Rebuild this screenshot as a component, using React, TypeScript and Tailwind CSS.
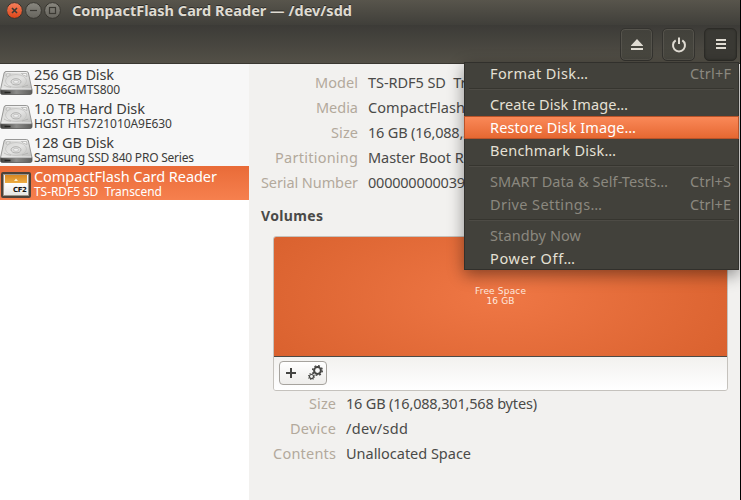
import { useLayoutEffect, useRef, useState } from "react";

/* One line of text whose tracking is adjusted so that it fills `w` pixels. */
function Fit({ text, w, className = "" }: { text: string; w: number; className?: string }) {
  const ref = useRef<HTMLSpanElement>(null);
  const [spacing, setSpacing] = useState(0);
  useLayoutEffect(() => {
    const el = ref.current;
    if (el) setSpacing((w - el.getBoundingClientRect().width) / (text.length - 1));
  }, [text, w]);
  return (
    <span className={"block whitespace-pre " + className} style={{ width: w }}>
      <span ref={ref} className="inline-block" style={{ letterSpacing: spacing }}>
        {text}
      </span>
    </span>
  );
}

function DiskIcon() {
  return (
    <svg width="33" height="26" viewBox="0 0 33 26" className="block">
      <defs>
        <linearGradient id="lid" x1="0" y1="0" x2="1" y2="1">
          <stop offset="0" stopColor="#cfcfcd" />
          <stop offset="0.5" stopColor="#e4e4e3" />
          <stop offset="1" stopColor="#b8b8b6" />
        </linearGradient>
        <linearGradient id="front" x1="0" x2="1">
          <stop offset="0" stopColor="#3e3e3c" />
          <stop offset="0.5" stopColor="#8c8c8a" />
          <stop offset="1" stopColor="#5d5d5b" />
        </linearGradient>
      </defs>
      <path d="M0.500 19.500h31.500v3.200q0 1.800-1.800 1.800H2.300Q.500 24.500 .500 22.700z" fill="url(#front)" stroke="#565654" strokeWidth=".8" />
      <path d="M6 1.500h20.500q1.500 0 1.900 1.500l3.600 16.700H.500L4.100 3Q4.500 1.500 6 1.500z" fill="url(#lid)" stroke="#8f8f8d" strokeWidth=".9" />
      <path d="M6 2.600h20.700M1.500 19h29.500" stroke="#f8f8f7" strokeWidth=".8" />
      <ellipse cx="16" cy="11" rx="10.500" ry="6.500" fill="none" stroke="#c3c3c1" strokeWidth=".8" />
      <ellipse cx="16" cy="11.800" rx="5" ry="3.100" fill="#dededd" stroke="#a6a6a4" strokeWidth=".8" />
      <ellipse cx="16" cy="11.800" rx="2.600" ry="1.500" fill="#eee" stroke="#b4b4b2" strokeWidth=".6" />
      <path d="M6.500 4h4L8.500 6h-2.500zM21.500 3.500h5l.5 3-4-1.500zM4 15l3 1.500 4 .7M22 17l6-1.800" fill="#f6f6f5" stroke="#a4a4a2" strokeWidth=".6" />
      <path d="M4.500 22.500h6" stroke="#242422" strokeWidth="1.600" />
    </svg>
  );
}

function CardIcon() {
  return (
    <div className="ml-px flex h-[26px] w-[30px] flex-col rounded-[2px] border-2 border-[#4b423a] bg-[#f1f1ef] shadow-[inset_0_0_0_1px_#9b948a]">
      <div className="mx-[2px] mt-px flex h-[8px] shrink-0 justify-center bg-linear-to-b from-[#d88721] to-[#edad43]">
        <svg width="6" height="8" className="block">
          <path d="M1 6L3 3.500l2 2.500z" fill="#fff2cf" />
        </svg>
      </div>
      <div className="mx-[2px] flex h-[12px] items-end justify-end bg-linear-to-b from-white to-[#e6e6e3] font-['DejaVu_Sans'] text-[7px] leading-[9px] font-bold text-[#111]">
        <Fit text="CF2" w={14} />
      </div>
    </div>
  );
}

const disks = [
  { name: "256 GB Disk", nw: 80, sub: "TS256GMTS800", sw: 86 },
  { name: "1.0 TB Hard Disk", nw: 111, sub: "HGST HTS721010A9E630", sw: 138 },
  { name: "128 GB Disk", nw: 80, sub: "Samsung SSD 840 PRO Series", sw: 160 },
  { name: "CompactFlash Card Reader", nw: 183, sub: "TS-RDF5 SD  Transcend", sw: 128, active: true },
];

const details = [
  { label: "Model", lw: 43, value: "TS-RDF5 SD  Transcend", vw: 155 },
  { label: "Media", lw: 42, value: "CompactFlash", vw: 97 },
  { label: "Size", lw: 27, value: "16 GB (16,088,301,568 bytes)", vw: 191 },
  { label: "Partitioning", lw: 83, value: "Master Boot Record", vw: 134 },
  { label: "Serial Number", lw: 97, value: "000000000039", vw: 97 },
];

const volume = [
  { label: "Size", lw: 27, value: "16 GB (16,088,301,568 bytes)", vw: 191 },
  { label: "Device", lw: 46, value: "/dev/sdd", vw: 62 },
  { label: "Contents", lw: 63, value: "Unallocated Space", vw: 125 },
];

function Row({ label, lw, value, vw, col }: { label: string; lw: number; value: string; vw: number; col: string }) {
  return (
    <div className="flex h-[25px] gap-[10px] text-[14.5px] leading-[25px]">
      <div className={"flex shrink-0 justify-end text-[#b3a99c] " + col}>
        <Fit text={label} w={lw} />
      </div>
      <Fit text={value} w={vw} className="text-[#4a4a48]" />
    </div>
  );
}

type Entry = { text: string; w: number; keys?: string; tone?: string } | null;
const menu: Entry[] = [
  { text: "Format Disk…", w: 98, keys: "Ctrl+F" },
  null,
  { text: "Create Disk Image…", w: 138 },
  { text: "Restore Disk Image…", w: 146, tone: "active" },
  { text: "Benchmark Disk…", w: 126 },
  null,
  { text: "SMART Data & Self-Tests…", w: 178, keys: "Ctrl+S", tone: "off" },
  { text: "Drive Settings…", w: 112, keys: "Ctrl+E", tone: "off" },
  null,
  { text: "Standby Now", w: 91, tone: "off" },
  { text: "Power Off…", w: 85 },
];

const toolButton =
  "flex h-[33px] w-[33px] items-center justify-center rounded-[5px] border border-[#34332f] bg-linear-to-b from-[#42413b] to-[#494840] shadow-[inset_0_0_0_1px_#55534c]";

function Menu() {
  return (
    <div className="absolute top-[62px] left-[464px] z-10 h-[208px] w-[275px] bg-[#42413b] text-[14.5px] shadow-[inset_0_0_0_1px_#31302c,0_5px_15px_rgba(0,0,0,0.42)]">
      {menu.map((m, i) =>
        m === null ? (
          <div key={i} className="flex h-[8px] items-center px-[5px]">
            <div className="h-[2px] w-full border-t border-b border-t-[#36352f] border-b-[#4d4b45]" />
          </div>
        ) : (
          <div
            key={i}
            className={
              "flex h-[23px] items-center justify-between pr-[8px] pl-[26px] leading-[21px] " +
              (m.tone === "active"
                ? "bg-linear-to-b from-[#fb8a59] to-[#e5662f] text-white shadow-[inset_0_0_0_1px_#b95329]"
                : m.tone === "off"
                  ? "text-[#8b887f]"
                  : "text-[#e5e0d5]")
            }
          >
            <Fit text={m.text} w={m.w} />
            {m.keys && <Fit text={m.keys} w={41} className="text-[#8b887f]" />}
          </div>
        ),
      )}
    </div>
  );
}

export default function App() {
  return (
    <div className="relative flex h-[500px] w-[741px] flex-col overflow-hidden border-r border-black bg-[#f2f1ef] font-['Noto_Sans',sans-serif]">
      <header className="shrink-0">
        <div className="flex h-[25px] items-center bg-linear-to-b from-[#58554c] to-[#403f3a] pl-[7px]">
          <svg width="54" height="18" viewBox="0 0 54 18" className="-mt-[6px] block shrink-0">
            <defs>
              <linearGradient id="red" x1="0" y1="0" x2="0" y2="1">
                <stop stopColor="#f5805d" />
                <stop offset="1" stopColor="#dd4517" />
              </linearGradient>
              <linearGradient id="grey" x1="0" y1="0" x2="0" y2="1">
                <stop stopColor="#8a8880" />
                <stop offset="1" stopColor="#65635c" />
              </linearGradient>
            </defs>
            <g stroke="#37352f" strokeWidth="1">
              <circle cx="7.500" cy="9.500" r="7.900" fill="url(#red)" />
              <circle cx="26.500" cy="9.500" r="7.900" fill="url(#grey)" />
              <circle cx="45.500" cy="9.500" r="7.900" fill="url(#grey)" />
            </g>
            <g fill="none" stroke="#3b3933" strokeWidth="1.200">
              <path d="M5 7l5 5M10 7l-5 5" strokeWidth="1.600" />
              <path d="M23 9.500h7" />
              <rect x="42.500" y="6.500" width="6" height="6" />
            </g>
          </svg>
          <Fit
            text="CompactFlash Card Reader — /dev/sdd"
            w={280}
            className="-mt-[6px] ml-[11px] text-[14.5px] leading-[20px] font-bold text-[#dfdbd2] [text-shadow:0_-1px_0_#2d2c28]"
          />
        </div>
        <div className="flex h-[39px] justify-end gap-[9px] border-b border-[#393731] bg-linear-to-b from-[#3c3b37] to-[#535047] pt-[3px] pr-[3px]">
          <div className={toolButton}>
            <svg width="14" height="14" viewBox="0 0 14 14" fill="#dfdbd2">
              <path d="M7 1L13 7.500v.5H1v-.5zM1 10h12v2H1z" />
            </svg>
          </div>
          <div className={toolButton}>
            <svg width="16" height="16" viewBox="0 0 16 16" fill="none" stroke="#dfdbd2" strokeWidth="2">
              <path d="M4.700 3.400a6 6 0 1 0 6.600 0M8 .5V7" />
            </svg>
          </div>
          <div className="flex h-[33px] w-[33px] items-center justify-center rounded-[5px] border border-[#2c2b27] bg-[#3a3934] shadow-[inset_0_0_2px_#292824]">
            <svg width="10" height="10" viewBox="0 0 10 10" fill="#dfdbd2" className="-mt-px">
              <path d="M0 0h10v2H0zM0 4h10v2H0zM0 8h10v2H0z" />
            </svg>
          </div>
        </div>
      </header>

      <div className="flex min-h-0 flex-1">
        <aside className="w-[249px] shrink-0 bg-white">
          {disks.map((d) => (
            <div
              key={d.name}
              className={
                "flex h-[34px] " +
                (d.active ? "bg-linear-to-b from-[#e96b38] to-[#f6804e] text-white" : "bg-[#f7f7f7] text-[#3c3c3a]")
              }
            >
              <div className="flex w-[34px] shrink-0 items-center pt-[4px]">{d.active ? <CardIcon /> : <DiskIcon />}</div>
              <div className="pt-[2px]">
                <Fit text={d.name} w={d.nw} className="h-[17px] text-[14.5px] leading-[17px]" />
                <Fit text={d.sub} w={d.sw} className="h-[14px] text-[12px] leading-[14px]" />
              </div>
            </div>
          ))}
        </aside>

        <main className="min-w-0 flex-1 overflow-hidden pt-[6px]">
          {details.map((r) => (
            <Row key={r.label} {...r} col="w-[109px]" />
          ))}
          <Fit text="Volumes" w={62} className="mt-[10px] ml-[12px] h-[22px] text-[14px] leading-[22px] font-bold text-[#4a4a48]" />
          <div className="mt-[9px] ml-6 h-[155px] w-[455px] overflow-hidden rounded-[3px] border border-[#c5c2bd]">
            <div className="flex h-[120px] flex-col items-center border-b border-[#4b4a46] bg-[radial-gradient(260px_110px_at_center,#ef7745,#da622f)] pt-[49px] font-['DejaVu_Sans'] text-[9px] leading-[10px] text-[#ffe9df]">
              <Fit text="Free Space" w={51} />
              <Fit text="16 GB" w={28} />
            </div>
            <div className="flex h-[33px] bg-linear-to-b from-[#f2f1ef] to-white pt-[4px] pl-[5px]">
              <div className="flex h-[24px] w-[48px] items-center rounded-[4px] border border-[#a6a39e] bg-linear-to-b from-white to-[#eeedeb]">
                <svg width="46" height="22" viewBox="0 0 46 22" fill="none" stroke="#454543">
                  <path d="M6 11h10M11 6v10" strokeWidth="2" />
                  <circle cx="37.500" cy="8.500" r="3.400" strokeWidth="2" />
                  <circle cx="37.500" cy="8.500" r="4.800" strokeWidth="1.500" strokeDasharray="1.880 1.890" />
                  <circle cx="31.500" cy="14.500" r="2" strokeWidth="1.100" />
                  <circle cx="31.500" cy="14.500" r="3" strokeWidth="1.100" strokeDasharray="1.100 1.256" />
                </svg>
              </div>
            </div>
          </div>
          {volume.map((r) => (
            <Row key={r.label} {...r} col="w-[87px]" />
          ))}
        </main>
      </div>
      <Menu />
    </div>
  );
}
